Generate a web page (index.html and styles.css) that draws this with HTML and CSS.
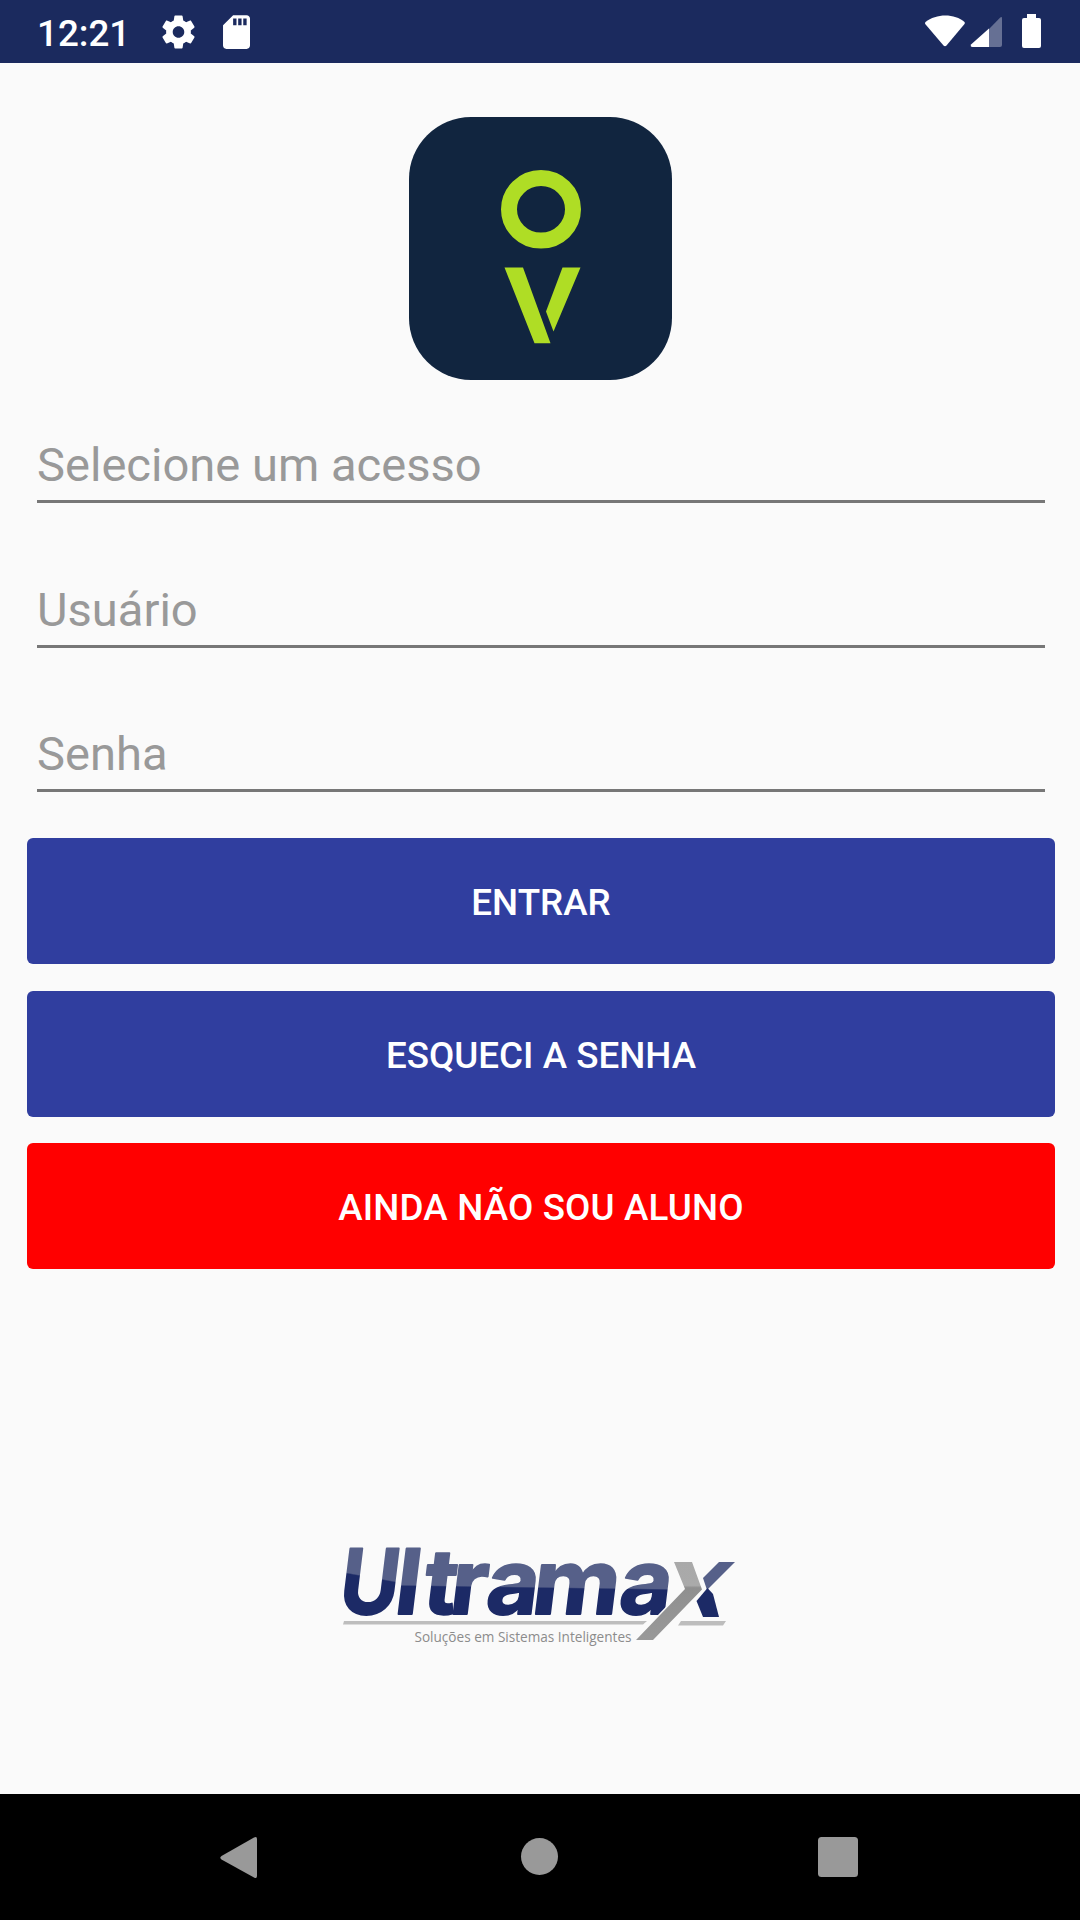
FILE: index.html
```html
<!DOCTYPE html>
<html lang="pt-BR">
<head>
<meta charset="utf-8">
<title>Ultramax</title>
<link rel="stylesheet" href="styles.css">
</head>
<body>
<div class="screen">
  <header class="status-bar">
    <span class="clock">12:21</span>
    <svg class="gear" viewBox="2 2 20 20" aria-hidden="true"><path fill="#fff" d="M19.43 12.98c.04-.32.07-.64.07-.98s-.03-.66-.07-.98l2.11-1.65c.19-.15.24-.42.12-.64l-2-3.46c-.12-.22-.39-.3-.61-.22l-2.49 1c-.52-.4-1.08-.73-1.69-.98l-.38-2.65C14.46 2.18 14.25 2 14 2h-4c-.25 0-.46.18-.49.42l-.38 2.65c-.61.25-1.17.59-1.69.98l-2.49-1c-.23-.09-.49 0-.61.22l-2 3.46c-.13.22-.07.49.12.64l2.11 1.65c-.04.32-.07.65-.07.98s.03.66.07.98l-2.11 1.65c-.19.15-.24.42-.12.64l2 3.46c.12.22.39.3.61.22l2.49-1c.52.4 1.08.73 1.69.98l.38 2.65c.03.24.24.42.49.42h4c.25 0 .46-.18.49-.42l.38-2.65c.61-.25 1.17-.59 1.69-.98l2.49 1c.23.09.49 0 .61-.22l2-3.46c.12-.22.07-.49-.12-.64l-2.11-1.65zM12 15.5c-1.93 0-3.5-1.57-3.5-3.5s1.57-3.5 3.5-3.5 3.5 1.57 3.5 3.5-1.57 3.5-3.5 3.5z"/></svg>
    <svg class="sd-card" viewBox="4 2 16 20" aria-hidden="true"><path fill="#fff" d="M18 2h-8L4.020 8 4 20c0 1.100.9 2 2 2h12c1.100 0 2-.9 2-2V4c0-1.100-.9-2-2-2zm-6 6h-2V4h2v4zm3 0h-2V4h2v4zm3 0h-2V4h2v4z"/></svg>
    <svg class="system-icons" viewBox="0 0 120 36" aria-hidden="true">
      <path fill="#fff" d="M1.500 7C12-1.700 31-1.700 40.500 7q.8 1 0 2L22.500 30.500q-1.500 1.500-3 0L1.200 9q-.6-1 .3-2z"/>
      <path fill="#667094" d="M65 14 76 2.800q2-1.700 2 .5V30q0 2-2 2H65z"/>
      <path fill="#fff" d="M65 13.500V32H48.500q-2.500 0-1.500-2.500z"/>
      <path fill="#fff" d="M103-1h9v4h3q2 0 2 2v26q0 2-2 2h-15q-2 0-2-2V5q0-2 2-2h3z"/>
    </svg>
  </header>

  <main class="login">
    <svg class="app-logo" viewBox="0 0 263 263" role="img" aria-label="OV">
      <rect width="263" height="263" rx="62" fill="#11253f"/>
      <ellipse cx="132" cy="92.300" rx="32" ry="31.300" fill="none" stroke="#afdd25" stroke-width="16"/>
      <path fill="#afdd25" d="M95.500 150.500H114L141.500 226.300H125.500zM153.500 150.500H171.500L144.500 214.500 137 194.500z"/>
    </svg>

    <form class="form">
      <div class="field">Selecione um acesso</div>
      <div class="field">Usuário</div>
      <div class="field">Senha</div>
      <div class="actions">
        <button class="btn" type="button">ENTRAR</button>
        <button class="btn" type="button">ESQUECI A SENHA</button>
        <button class="btn btn-alert" type="button">AINDA NÃO SOU ALUNO</button>
      </div>
    </form>

    <svg class="brand" viewBox="330 1500 420 160">
      <defs>
        <linearGradient id="steel" gradientUnits="userSpaceOnUse" x1="0" y1="1562" x2="0" y2="1640">
          <stop offset="0" stop-color="#a9a9a9"/><stop offset=".3" stop-color="#aaa"/>
          <stop offset=".33" stop-color="#8f8f8f"/><stop offset="1" stop-color="#999"/>
        </linearGradient>
        <linearGradient id="navy-u" gradientUnits="userSpaceOnUse" x1="380" y1="-68" x2="368" y2="0">
          <stop offset=".48" stop-color="#566089"/><stop offset=".5" stop-color="#1c2a66"/>
        </linearGradient>
        <linearGradient id="navy" gradientUnits="userSpaceOnUse" x1="500" y1="-68" x2="499" y2="0">
          <stop offset=".6" stop-color="#566089"/><stop offset=".62" stop-color="#1c2a66"/>
        </linearGradient>
      </defs>
      <text class="wordmark" transform="translate(0 1613.500) skewX(-7)"><tspan class="wordmark-initial" x="337" textLength="59" lengthAdjust="spacingAndGlyphs">U</tspan><tspan x="393">l</tspan><tspan x="421">t</tspan><tspan x="448">r</tspan><tspan x="484">a</tspan><tspan x="530" textLength="87" lengthAdjust="spacingAndGlyphs">m</tspan><tspan x="617">a</tspan></text>
      <path fill="#566089" d="M719 1562H735L707 1590 703 1578z"/>
      <path fill="#1c2a66" d="M707.500 1588 713 1594 719 1617H703L696.500 1601z"/>
      <path fill="url(#steel)" stroke="#fafafa" stroke-width="3" paint-order="stroke" d="M674 1562H692L702 1589.500 653 1640H636L685 1589z"/>
      <path fill="#bdbdbd" d="M344 1621H647L643 1624.500H343zM681 1621H726L723 1625.500H678z"/>
      <text class="tagline" x="414.500" y="1642" textLength="217" lengthAdjust="spacingAndGlyphs">Soluções em Sistemas Inteligentes</text>
    </svg>
  </main>

  <nav class="nav-bar">
    <svg viewBox="0 0 44 44" aria-hidden="true"><path fill="#999" d="M1.500 20 34 1.500q3-1.500 3 1.500v37q0 3-3 1.500L1.500 23.500q-2.500-1.700 0-3.500z"/></svg>
    <svg viewBox="0 0 44 44" aria-hidden="true"><circle cx="21.500" cy="20.500" r="18.500" fill="#999"/></svg>
    <svg viewBox="0 0 44 44" aria-hidden="true"><rect x="2" y="1" width="40" height="40" rx="3.500" fill="#999"/></svg>
  </nav>
</div>
</body>
</html>
```
FILE: styles.css
```css
* { box-sizing: border-box; }

body {
  margin: 0;
  background: #fafafa;
  font-family: Roboto, sans-serif;
}

.screen {
  display: flex;
  flex-direction: column;
  width: 1080px;
  height: 1920px;
  background: #fafafa;
}

.status-bar {
  display: flex;
  align-items: center;
  height: 63px;
  padding: 0 37px;
  background: #1b2a5e;
  color: #fff;
}

.clock {
  width: 125px;
  padding-top: 4px;
  font-size: 36.75px;
  font-weight: 500;
  line-height: 44px;
}

.gear { width: 33px; height: 34px; }

.sd-card {
  width: 27px;
  height: 34px;
  margin-left: 28px;
}

.system-icons {
  width: 120px;
  height: 36px;
  margin: 2px -1px 0 auto;
  overflow: visible;
}

.login {
  display: flex;
  flex: 1;
  flex-direction: column;
  align-items: center;
  padding-top: 54px;
}

.app-logo {
  width: 263px;
  height: 263px;
  margin-left: 1px;
}

.form {
  width: 1028px;
  margin: 57px 0 0 2px;
}

.field {
  height: 66px;
  margin: 0 10px 78px;
  border-bottom: 3px solid #777;
  color: #999;
  font-size: 47.1px;
  line-height: 56px;
}

.field:first-child { margin-bottom: 79px; }

.field:nth-child(3) { margin-bottom: 46px; }

.actions {
  display: flex;
  flex-direction: column;
  gap: 26px;
}

.btn {
  height: 126px;
  padding: 3px 0 0;
  border: 0;
  border-radius: 6px;
  background: #303e9f;
  color: #fff;
  font: 500 36.75px/44px Roboto, sans-serif;
}

.btn:first-child { margin-bottom: 1px; }

.btn-alert {
  background: #f00;
  letter-spacing: .15px;
}

.brand {
  width: 420px;
  height: 160px;
  margin-top: 231px;
  overflow: visible;
}

.wordmark {
  fill: url(#navy);
  stroke: url(#navy);
  stroke-width: 2px;
  stroke-linejoin: round;
  font: 700 90px Inter, sans-serif;
}

.wordmark-initial {
  fill: url(#navy-u);
  stroke: url(#navy-u);
}

.tagline {
  fill: #8c8c8c;
  font: 14.500px "Open Sans", sans-serif;
}

.nav-bar {
  display: flex;
  justify-content: space-between;
  height: 126px;
  padding: 42px 220px 0;
  background: #000;
}

.nav-bar svg { width: 44px; height: 44px; }
```
